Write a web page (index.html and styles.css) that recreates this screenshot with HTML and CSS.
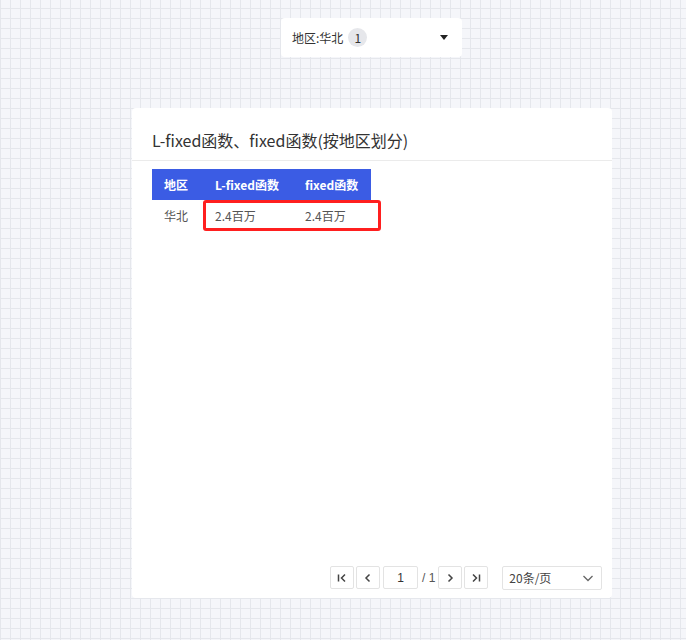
FILE: index.html
```html
<!DOCTYPE html>
<html lang="zh">
<head>
<meta charset="utf-8">
<link rel="stylesheet" href="styles.css">
</head>
<body>
<div class="page">
  <div class="filter-row">
    <div class="filter">
      <span class="filter-label">地区:华北</span>
      <span class="badge">1</span>
      <span class="caret"></span>
    </div>
  </div>
  <div class="card">
    <div class="card-title">L-fixed函数、fixed函数(按地区划分)</div>
    <div class="card-body">
      <div class="table-wrap">
        <table class="grid">
          <thead>
            <tr><th class="c1">地区</th><th class="c2">L-fixed函数</th><th class="c3">fixed函数</th></tr>
          </thead>
          <tbody>
            <tr><td class="c1">华北</td><td class="c2">2.4百万</td><td class="c3">2.4百万</td></tr>
          </tbody>
        </table>
        <div class="highlight"></div>
      </div>
    </div>
    <div class="pager">
      <button class="pbtn"><svg width="12" height="12" viewBox="0 0 12 12"><path d="M2.5 2.5v7M9 2.5L5.5 6L9 9.5" fill="none" stroke="#444" stroke-width="1.5"/></svg></button>
      <button class="pbtn"><svg width="12" height="12" viewBox="0 0 12 12"><path d="M7.5 2.5L4 6l3.5 3.5" fill="none" stroke="#444" stroke-width="1.5"/></svg></button>
      <div class="pinput">1</div>
      <span class="ptotal">/ 1</span>
      <button class="pbtn"><svg width="12" height="12" viewBox="0 0 12 12"><path d="M4.5 2.5L8 6l-3.5 3.5" fill="none" stroke="#444" stroke-width="1.5"/></svg></button>
      <button class="pbtn"><svg width="12" height="12" viewBox="0 0 12 12"><path d="M3 2.5L6.5 6L3 9.5M9.5 2.5v7" fill="none" stroke="#444" stroke-width="1.5"/></svg></button>
      <div class="psize"><span>20条/页</span><svg width="14" height="14" viewBox="0 0 14 14"><path d="M2.5 5l4.5 4.5L11.5 5" fill="none" stroke="#666" stroke-width="1.3"/></svg></div>
    </div>
  </div>
</div>
</body>
</html>
```
FILE: styles.css
```css
* { box-sizing: border-box; }
html, body { margin: 0; padding: 0; }
body {
  width: 686px;
  height: 640px;
  overflow: hidden;
  font-family: "Noto Sans CJK SC", "Noto Sans", sans-serif;
  background-color: #f5f6fa;
  background-image:
    linear-gradient(to right, #e5e7ec 1px, transparent 1px),
    linear-gradient(to bottom, #e5e7ec 1px, transparent 1px);
  background-size: 10px 10px;
  background-position: 0px 0px, 0px 8px;
}
.page { padding-top: 18px; }
.filter-row { display: flex; padding-left: 281px; }
.filter {
  width: 181px;
  height: 39px;
  background: #fff;
  border-radius: 4px;
  display: flex;
  align-items: center;
  padding: 0 14px 0 11px;
  font-size: 12px;
  color: #333;
}
.filter-label { line-height: 1; }
.badge {
  margin-left: 5px;
  width: 19px;
  height: 19px;
  border-radius: 50%;
  background: #e6e7eb;
  display: flex;
  align-items: center;
  justify-content: center;
  font-size: 12px;
  color: #333;
}
.caret {
  margin-left: auto;
  width: 0; height: 0;
  border-left: 4px solid transparent;
  border-right: 4px solid transparent;
  border-top: 5px solid #222;
}
.card {
  margin: 51px 0 0 132px;
  width: 480px;
  height: 490px;
  background: #fff;
  border-radius: 4px;
  display: flex;
  flex-direction: column;
}
.card-title {
  height: 53px;
  padding: 20px 20px 0 20px;
  font-size: 16px;
  line-height: 24px;
  color: #333;
  border-bottom: 1px solid #ebebeb;
}
.card-body { padding: 8px 20px 0 20px; flex: 1; }
.table-wrap { position: relative; width: 230px; }
.grid { border-collapse: collapse; font-size: 12px; }
.grid th {
  background: #3b5ce4;
  color: #fff;
  font-weight: bold;
  height: 31px;
  padding: 0;
  text-align: left;
}
.grid td {
  height: 30px;
  padding: 0;
  color: #555;
}
.c1 { width: 49px; padding-left: 12px !important; }
.c2 { width: 90px; padding-left: 14px !important; }
.c3 { width: 80px; padding-left: 14px !important; }
.highlight {
  position: absolute;
  left: 51px;
  top: 31px;
  width: 178px;
  height: 31px;
  border: 3px solid #ff1f1f;
  border-radius: 3px;
}
.pager {
  display: flex;
  align-items: center;
  padding: 0 10px 9px 198px;
  height: 32px;
}
.pager > * { flex-shrink: 0; }
.pbtn {
  width: 24px;
  height: 23px;
  border: 1px solid #e3e3e3;
  border-radius: 2px;
  background: #fff;
  padding: 0;
  margin-right: 2px;
  display: flex;
  align-items: center;
  justify-content: center;
}
.pinput {
  width: 35px;
  height: 23px;
  border: 1px solid #e3e3e3;
  border-radius: 2px;
  margin-left: 1px;
  display: flex;
  align-items: center;
  justify-content: center;
  font-size: 12px;
  color: #333;
  font-family: "Liberation Sans", sans-serif;
}
.ptotal {
  font-size: 12px;
  color: #555;
  margin: 0 3px 0 4px;
  white-space: nowrap;
  font-family: "Liberation Sans", sans-serif;
}
.psize {
  margin-left: 12px;
  width: 100px;
  height: 24px;
  border: 1px solid #e3e3e3;
  border-radius: 2px;
  display: flex;
  align-items: center;
  justify-content: space-between;
  padding: 0 6px 0 6px;
  font-size: 12px;
  color: #444;
}
```
